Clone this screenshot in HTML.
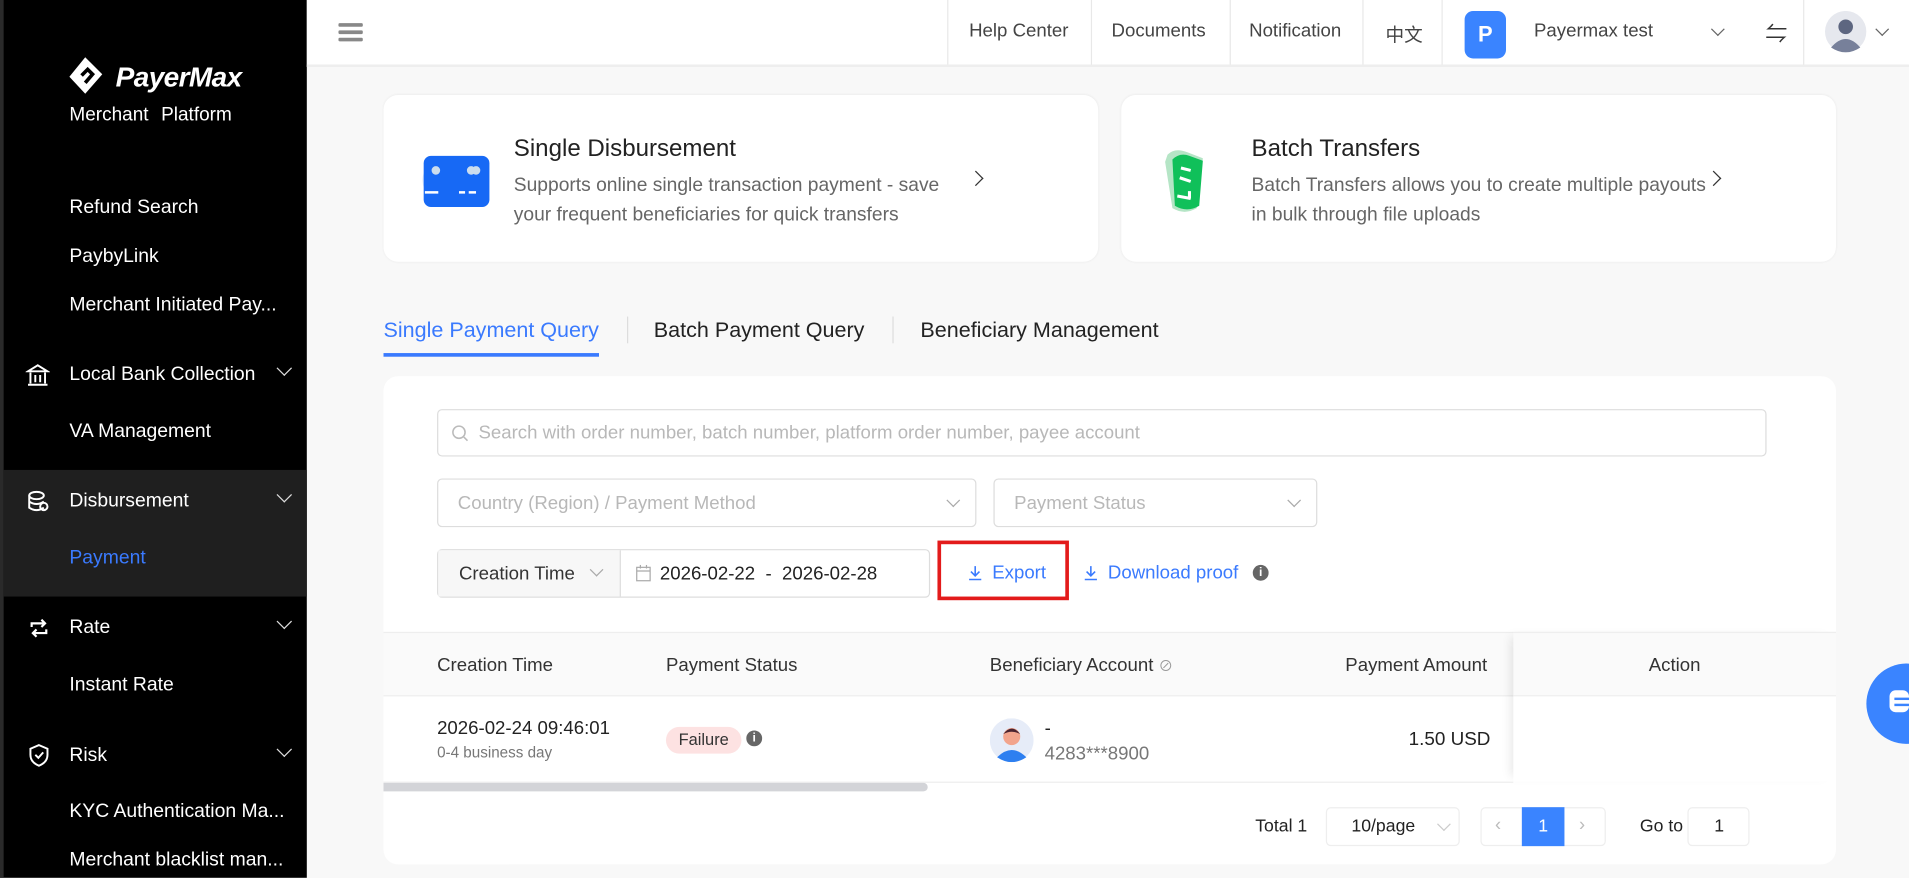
<!DOCTYPE html>
<html><head><meta charset="utf-8"><style>
html,body{margin:0;padding:0;width:1909px;height:878px;overflow:hidden;background:#f8f8f8}
#w{position:absolute;left:0;top:0;width:1568px;height:721px;transform:scale(1.21747);transform-origin:0 0;font-family:"Liberation Sans","Noto Sans CJK SC",sans-serif;color:#222}
.a{position:absolute;white-space:nowrap}
#sb{position:absolute;left:0;top:0;width:252px;height:721px;background:#000;border-left:3px solid #2a2a2a;box-sizing:border-box}
.mi{position:absolute;left:54px;color:#fff;font-size:15.9px}
.chev{position:absolute;left:226px;width:8px;height:8px;border-right:1.5px solid #ddd;border-bottom:1.5px solid #ddd;transform:rotate(45deg)}
#hd{position:absolute;left:252px;top:0;width:1316px;height:53px;background:#fff;border-bottom:2px solid #eee}
.sep{position:absolute;top:0;width:1px;height:53px;background:#e8e8e8}
.hl{position:absolute;top:17px;font-size:15.3px;color:#444}
.card{position:absolute;top:78px;height:137px;background:#fff;border-radius:12px;box-shadow:0 0 2px rgba(0,0,0,.06)}
.ct{position:absolute;left:107px;top:33px;font-size:19.8px;color:#222}
.cd{position:absolute;left:107px;top:63px;font-size:15.8px;color:#666;line-height:24px}
.rc{position:absolute;width:8px;height:8px;border-right:1.5px solid #333;border-top:1.5px solid #333;transform:rotate(45deg)}
.in{position:absolute;border:1px solid #ddd;border-radius:4px;background:#fff;box-sizing:border-box}
.dc{position:absolute;width:7px;height:7px;border-right:1px solid #aaa;border-bottom:1px solid #aaa;transform:rotate(45deg)}
.ph{color:#b8b8b8;font-size:15.3px}
.th{position:absolute;top:538px;font-size:15.3px;color:#333}
</style></head><body><div id="w">
<div id="sb">
 <svg class="a" style="left:52px;top:44px" width="36" height="36" viewBox="0 0 36 36"><path d="M15 3 L29 17 L15 33 L2 19 Z" fill="#fff"/><path d="M12 18 L17 13 L21 17 L15 24" fill="none" stroke="#000" stroke-width="3"/></svg>
 <div class="a" style="left:92px;top:50px;color:#fff;font-size:23px;font-weight:bold;font-style:italic;letter-spacing:-0.5px">PayerMax</div>
 <div class="a" style="left:54px;top:86px;color:#fff;font-size:15.6px;word-spacing:6px">Merchant Platform</div>
 <div class="mi" style="top:162px">Refund Search</div>
 <div class="mi" style="top:202px">PaybyLink</div>
 <div class="mi" style="top:242px">Merchant Initiated Pay...</div>
 <svg class="a" style="left:18px;top:298px" width="20" height="20" viewBox="0 0 20 20" fill="none" stroke="#fff" stroke-width="1.6"><path d="M2 7 L10 2 L18 7 Z M4 8 V17 M16 8 V17 M2 18 H18 M8 10 V16 M12 10 V16"/></svg>
 <div class="mi" style="top:299px">Local Bank Collection</div><div class="chev" style="top:298px"></div>
 <div class="mi" style="top:346px">VA Management</div>
 <div class="a" style="left:0;top:386px;width:249px;height:104px;background:#1f1f1f"></div>
 <svg class="a" style="left:18px;top:402px" width="20" height="20" viewBox="0 0 20 20" fill="none" stroke="#fff" stroke-width="1.6"><ellipse cx="9" cy="5" rx="6" ry="3"/><path d="M3 5 V15 Q9 19 15 15 M3 10 Q9 14 15 10"/><circle cx="15" cy="14" r="3"/></svg>
 <div class="mi" style="top:403px">Disbursement</div><div class="chev" style="top:402px"></div>
 <div class="mi" style="top:450px;color:#3a7afe">Payment</div>
 <svg class="a" style="left:19px;top:506px" width="20" height="20" viewBox="0 0 20 20" fill="none" stroke="#fff" stroke-width="1.8"><path d="M4 9 V6 H15 M12 3 L15 6 L12 9 M16 11 V14 H5 M8 11 L5 14 L8 17"/></svg>
 <div class="mi" style="top:507px">Rate</div><div class="chev" style="top:506px"></div>
 <div class="mi" style="top:554px">Instant Rate</div>
 <svg class="a" style="left:19px;top:610px" width="20" height="20" viewBox="0 0 20 20" fill="none" stroke="#fff" stroke-width="1.6"><path d="M10 2 L17 5 V10 Q17 16 10 19 Q3 16 3 10 V5 Z M7 10 L9.5 12.5 L13.5 8"/></svg>
 <div class="mi" style="top:612px">Risk</div><div class="chev" style="top:611px"></div>
 <div class="mi" style="top:658px">KYC Authentication Ma...</div>
 <div class="mi" style="top:698px">Merchant blacklist man...</div>
</div>
<div id="hd">
 <div class="a" style="left:26px;top:19px;width:20px;height:3px;background:#888;box-shadow:0 6px 0 #888,0 12px 0 #888;border-radius:1px"></div>
 <div class="sep" style="left:526px"></div><div class="sep" style="left:644px"></div><div class="sep" style="left:758px"></div><div class="sep" style="left:867px"></div><div class="sep" style="left:932px"></div><div class="sep" style="left:1229px"></div>
 <div class="hl" style="left:544px">Help Center</div><div class="hl" style="left:661px">Documents</div><div class="hl" style="left:774px">Notification</div><div class="hl" style="left:886px">中文</div>
 <div class="a" style="left:951px;top:9px;width:34px;height:39px;background:#3a84ff;border-radius:7px;color:#fff;font-weight:bold;font-size:18px;text-align:center;line-height:39px">P</div>
 <div class="hl" style="left:1008px">Payermax test</div>
 <div class="dc" style="left:1155px;top:20px;border-color:#666"></div>
 <div class="a" style="left:1198px;top:14px;font-size:18px;color:#333">⇋</div>
 <svg class="a" style="left:1247px;top:9px" width="34" height="34" viewBox="0 0 34 34"><circle cx="17" cy="17" r="17" fill="#e6e8ee"/><circle cx="17" cy="13" r="6" fill="#5d6680"/><path d="M5 30 Q17 16 29 30 Q17 38 5 30Z" fill="#77809a"/></svg>
 <div class="dc" style="left:1290px;top:20px;border-color:#666"></div>
</div>
<div class="card" style="left:315px;width:587px">
 <svg class="a" style="left:32px;top:42px" width="56" height="56" viewBox="0 0 56 56"><circle cx="18" cy="28" r="18" fill="#dde8fb"/><rect x="1" y="8" width="54" height="42" rx="6" fill="#1769f5"/><circle cx="11" cy="20" r="3.5" fill="#cde"/><circle cx="40" cy="20" r="3.5" fill="#cde"/><circle cx="44" cy="20" r="3.5" fill="#cde"/><path d="M2 38 H13 M30 38 H35 M38 38 H44" stroke="#fff" stroke-width="2"/></svg>
 <div class="ct">Single Disbursement</div>
 <div class="cd">Supports online single transaction payment - save<br>your frequent beneficiaries for quick transfers</div>
 <div class="rc" style="left:482px;top:64px"></div>
</div>
<div class="card" style="left:921px;width:587px">
 <svg class="a" style="left:34px;top:45px" width="40" height="52" viewBox="0 0 40 52"><path d="M4 4 Q10 -2 20 2 L33 7 L28 48 Q18 54 8 48 L2 10Z" fill="#b5e5c6"/><path d="M8 8 Q14 2 22 5 L33 9 L30 46 Q20 52 10 46Z" fill="#10c05a"/><path d="M15 15 L23 17 M14 23 L23 26 M12 38 L23 40 M22 34 V40" stroke="#fff" stroke-width="2.5"/></svg>
 <div class="ct">Batch Transfers</div>
 <div class="cd">Batch Transfers allows you to create multiple payouts<br>in bulk through file uploads</div>
 <div class="rc" style="left:482px;top:64px"></div>
</div>
<div class="a" style="left:315px;top:261px;font-size:17.7px;color:#3a7afe">Single Payment Query</div>
<div class="a" style="left:315px;top:290px;width:177px;height:3px;background:#3a7afe"></div>
<div class="a" style="left:515px;top:260px;width:1px;height:22px;background:#ddd"></div>
<div class="a" style="left:537px;top:261px;font-size:17.7px">Batch Payment Query</div>
<div class="a" style="left:733px;top:260px;width:1px;height:22px;background:#ddd"></div>
<div class="a" style="left:756px;top:261px;font-size:17.7px">Beneficiary Management</div>
<div class="a" style="left:315px;top:309px;width:1193px;height:401px;background:#fff;border-radius:12px"></div>
<div class="in" style="left:359px;top:336px;width:1092px;height:39px"><svg class="a" style="left:11px;top:12px" width="14" height="14" viewBox="0 0 14 14" fill="none" stroke="#bbb" stroke-width="1.3"><circle cx="6" cy="6" r="5"/><path d="M10 10 L13 13"/></svg><span class="a ph" style="left:33px;top:10px">Search with order number, batch number, platform order number, payee account</span></div>
<div class="in" style="left:359px;top:393px;width:443px;height:40px"><span class="a ph" style="left:16px;top:11px">Country (Region) / Payment Method</span><div class="dc" style="left:419px;top:13px"></div></div>
<div class="in" style="left:816px;top:393px;width:266px;height:40px"><span class="a ph" style="left:16px;top:11px">Payment Status</span><div class="dc" style="left:242px;top:13px"></div></div>
<div class="in" style="left:359px;top:451px;width:405px;height:40px">
 <div class="a" style="left:0;top:0;width:149px;height:38px;background:#f7f7f7;border-right:1px solid #ddd"></div>
 <span class="a" style="left:17px;top:11px;font-size:15.3px;color:#333">Creation Time</span><div class="dc" style="left:126px;top:12px"></div>
 <svg class="a" style="left:162px;top:12px" width="13" height="14" viewBox="0 0 13 14" fill="none" stroke="#aaa"><rect x="1" y="2" width="11" height="11"/><path d="M1 5 H12 M4 0 V3 M9 0 V3"/></svg>
 <span class="a" style="left:182px;top:11px;font-size:15.3px;color:#222">2026-02-22 &nbsp;- &nbsp;2026-02-28</span>
</div>
<div class="a" style="left:770px;top:444px;width:108px;height:49px;border:3px solid #e31b1b;box-sizing:border-box"></div>
<svg class="a" style="left:795px;top:464px" width="12" height="13" viewBox="0 0 12 13" fill="none" stroke="#3a7afe" stroke-width="1.3"><path d="M6 1 V9 M2.5 5.5 L6 9 L9.5 5.5 M1 12 H11"/></svg>
<div class="a" style="left:815px;top:462px;font-size:15.3px;color:#3a7afe">Export</div>
<svg class="a" style="left:890px;top:464px" width="12" height="13" viewBox="0 0 12 13" fill="none" stroke="#3a7afe" stroke-width="1.3"><path d="M6 1 V9 M2.5 5.5 L6 9 L9.5 5.5 M1 12 H11"/></svg>
<div class="a" style="left:910px;top:462px;font-size:15.3px;color:#3a7afe">Download proof</div>
<div class="a" style="left:1029px;top:464px;width:13px;height:13px;border-radius:50%;background:#666;color:#fff;font-size:10px;text-align:center;line-height:13px;font-weight:bold">i</div>
<div class="a" style="left:315px;top:519px;width:1193px;height:53px;background:#fafafa;border-top:1px solid #eee;border-bottom:1px solid #eee;box-sizing:border-box"></div>
<div class="th" style="left:359px">Creation Time</div><div class="th" style="left:547px">Payment Status</div><div class="th" style="left:813px">Beneficiary Account <span style="color:#999;font-size:12px">⊘</span></div><div class="th" style="left:1105px">Payment Amount</div>
<div class="a" style="left:1243px;top:519px;width:265px;height:123px;background:transparent;box-shadow:-6px 0 8px -4px rgba(0,0,0,.1)"><div style="height:53px;background:#fafafa;border-top:1px solid #eee;border-bottom:1px solid #eee;box-sizing:border-box;text-align:center;line-height:53px;font-size:15.3px;color:#333">Action</div><div style="height:70px;background:#fff"></div></div>
<div class="a" style="left:315px;top:642px;width:928px;height:1px;background:#eee"></div>
<div class="a" style="left:359px;top:590px;font-size:15.3px">2026-02-24 09:46:01</div>
<div class="a" style="left:359px;top:611px;font-size:12.5px;color:#777">0-4 business day</div>
<div class="a" style="left:547px;top:597px;width:62px;height:22px;border-radius:11px;background:#fde2e2;font-size:13.5px;text-align:center;line-height:22px;color:#333">Failure</div>
<div class="a" style="left:613px;top:600px;width:13px;height:13px;border-radius:50%;background:#666;color:#fff;font-size:10px;text-align:center;line-height:13px;font-weight:bold">i</div>
<svg class="a" style="left:813px;top:590px" width="36" height="36" viewBox="0 0 36 36"><circle cx="18" cy="18" r="18" fill="#e6ecf8"/><circle cx="18" cy="15" r="7" fill="#f2a48c"/><path d="M11 13 Q18 4 25 13 Q18 9 11 13Z" fill="#4a2430"/><path d="M6 32 Q18 20 30 32 Q18 40 6 32Z" fill="#2d7ff0"/></svg>
<div class="a" style="left:858px;top:590px;font-size:15.3px">-</div>
<div class="a" style="left:858px;top:611px;font-size:15.3px;color:#777">4283***8900</div>
<div class="a" style="left:1157px;top:599px;font-size:15.5px">1.50 USD</div>
<div class="a" style="left:315px;top:643px;width:447px;height:7px;background:#d3d4d8;border-radius:0 4px 4px 0"></div>
<div class="a" style="left:1031px;top:671px;font-size:14.5px">Total 1</div>
<div class="in" style="left:1089px;top:663px;width:110px;height:32px;border-color:#eee"><span class="a" style="left:20px;top:7px;font-size:14.5px">10/page</span><div class="dc" style="left:92px;top:9px;border-color:#ccc"></div></div>
<div class="in" style="left:1216px;top:663px;width:103px;height:32px;border-color:#eee"><span class="a" style="left:11px;top:5px;color:#bbb;font-size:15px">‹</span><div class="a" style="left:33px;top:-1px;width:35px;height:32px;background:#3a84ff;color:#fff;text-align:center;line-height:32px;font-size:14.5px">1</div><span class="a" style="left:80px;top:5px;color:#bbb;font-size:15px">›</span></div>
<div class="a" style="left:1347px;top:671px;font-size:14.5px">Go to</div>
<div class="in" style="left:1386px;top:663px;width:51px;height:32px;border-color:#eee"><span class="a" style="left:21px;top:7px;font-size:14.5px">1</span></div>
<div class="a" style="left:1533px;top:545px;width:66px;height:66px;border-radius:50%;background:#3a84ff"></div>
<div class="a" style="left:1552px;top:567px;width:16px;height:18px;border-radius:5px;background:#fff"></div>
<div class="a" style="left:1556px;top:573px;width:12px;height:2px;background:#3a84ff;box-shadow:0 5px 0 #3a84ff"></div>
</div></body></html>
